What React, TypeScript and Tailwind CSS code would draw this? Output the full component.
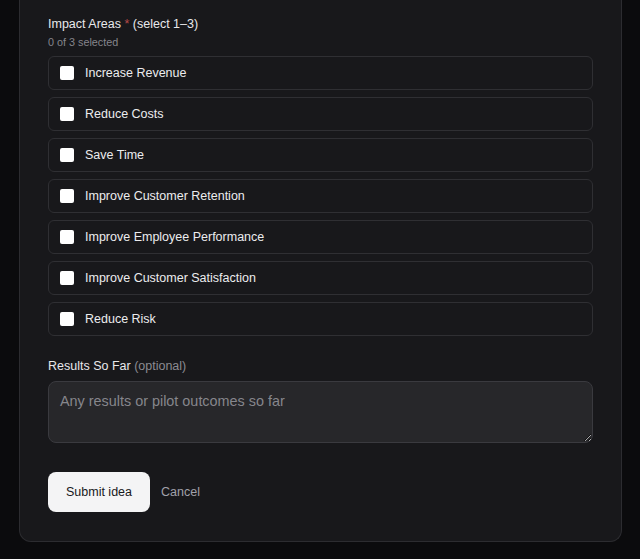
import * as React from "react"

const areas = [
  "Increase Revenue",
  "Reduce Costs",
  "Save Time",
  "Improve Customer Retention",
  "Improve Employee Performance",
  "Improve Customer Satisfaction",
  "Reduce Risk",
]

export default function App() {
  const [selected, setSelected] = React.useState<string[]>([])

  const toggle = (a: string) =>
    setSelected((s) => (s.includes(a) ? s.filter((x) => x !== a) : s.length < 3 ? [...s, a] : s))

  return (
    <div className="min-h-[559px] bg-[#0b0b0d] font-['Liberation_Sans',Arial,sans-serif]">
      <div className="ml-[19px] w-[603px] rounded-b-[12px] border-x border-b border-[#2c2c30] bg-[#18181b] px-[28px] pt-[14px] pb-[29px]">
        {/* Impact areas */}
        <div className="text-[12.5px] leading-[20px] text-[#e8e8eb]">
          Impact Areas <span className="text-[#b94a4a]">*</span> (select 1–3)
        </div>
        <div className="text-[10.8px] leading-[16px] text-[#85858c]">{selected.length} of 3 selected</div>

        <div className="mt-[6px] flex flex-col gap-[7px]">
          {areas.map((a) => {
            const on = selected.includes(a)
            return (
              <label
                key={a}
                className="flex h-[34px] cursor-pointer items-center gap-[11px] rounded-[6px] border border-[#2f2f33] bg-[#18181b] px-[11px]"
                onClick={() => toggle(a)}
              >
                <span
                  className={
                    on
                      ? "flex h-[14px] w-[14px] items-center justify-center rounded-[2px] bg-[#3b82f6] text-[10px] text-white"
                      : "h-[14px] w-[14px] rounded-[2px] bg-white"
                  }
                >
                  {on ? "✓" : null}
                </span>
                <span className="text-[12.5px] text-[#ececee]">{a}</span>
              </label>
            )
          })}
        </div>

        {/* Results */}
        <div className="mt-[20px] text-[12.5px] leading-[20px] text-[#e8e8eb]">
          Results So Far <span className="text-[#8b8b92]">(optional)</span>
        </div>
        <textarea
          placeholder="Any results or pilot outcomes so far"
          className="mt-[5px] block h-[62px] w-full rounded-[8px] border border-[#3a3a3f] bg-[#27272a] px-[11px] py-[9px] text-[14.4px] text-[#e4e4e7] outline-none placeholder:text-[#86868c]"
        />

        <div className="mt-[29px] flex items-center gap-[11px]">
          <button className="h-[40px] w-[102px] rounded-[8px] bg-[#f4f4f5] text-[12.5px] text-[#18181b]">
            Submit idea
          </button>
          <button className="mt-[1px] text-[12.5px] text-[#a1a1aa]">Cancel</button>
        </div>
      </div>
    </div>
  )
}
